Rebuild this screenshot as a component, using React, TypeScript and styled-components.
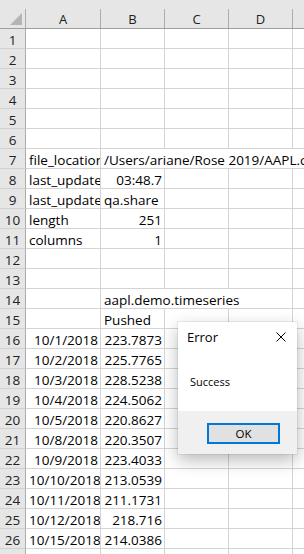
import styled, { createGlobalStyle } from "styled-components";

type Align = "left" | "right";
type CellDef = { text?: string; align?: Align; span?: number };

const COLS = ["A", "B", "C", "D", "E"];
const WIDTHS = [75, 64, 64, 64, 64];

const rows: { n: number; cells: CellDef[] }[] = [
  { n: 1, cells: [] },
  { n: 2, cells: [] },
  { n: 3, cells: [] },
  { n: 4, cells: [] },
  { n: 5, cells: [] },
  { n: 6, cells: [] },
  {
    n: 7,
    cells: [
      { text: "file_location" },
      { text: "/Users/ariane/Rose 2019/AAPL.csv", span: 4 },
    ],
  },
  { n: 8, cells: [{ text: "last_updated" }, { text: "03:48.7", align: "right" }] },
  { n: 9, cells: [{ text: "last_updated_by" }, { text: "qa.share" }] },
  { n: 10, cells: [{ text: "length" }, { text: "251", align: "right" }] },
  { n: 11, cells: [{ text: "columns" }, { text: "1", align: "right" }] },
  { n: 12, cells: [] },
  { n: 13, cells: [] },
  { n: 14, cells: [{}, { text: "aapl.demo.timeseries", span: 3 }] },
  { n: 15, cells: [{}, { text: "Pushed" }] },
  ...[
    ["10/1/2018", "223.7873"],
    ["10/2/2018", "225.7765"],
    ["10/3/2018", "228.5238"],
    ["10/4/2018", "224.5062"],
    ["10/5/2018", "220.8627"],
    ["10/8/2018", "220.3507"],
    ["10/9/2018", "223.4033"],
    ["10/10/2018", "213.0539"],
    ["10/11/2018", "211.1731"],
    ["10/12/2018", "218.716"],
    ["10/15/2018", "214.0386"],
    ["10/16/2018", "221.1946"],
  ].map(([d, v], i) => ({
    n: 16 + i,
    cells: [
      { text: d, align: "right" as Align },
      { text: v, align: "right" as Align },
    ],
  })),
];

// expand a row's defs into one entry per visible cell, merging spans
function fillRow(defs: CellDef[]) {
  const out: (CellDef & { width: number })[] = [];
  let col = 0;
  defs.forEach((d) => {
    const span = d.span ?? 1;
    const width = WIDTHS.slice(col, col + span).reduce((a, b) => a + b, 0);
    out.push({ ...d, width });
    col += span;
  });
  while (col < COLS.length) {
    out.push({ width: WIDTHS[col] });
    col++;
  }
  return out;
}

export default function App() {
  return (
    <>
      <GlobalStyle />
      <Sheet>
        <HeaderBar>
          <Corner>
            <svg width="12" height="12" viewBox="0 0 12 12">
              <polygon points="12,0 12,12 0,12" fill="#b4b4b4" />
            </svg>
          </Corner>
          {COLS.map((c, i) => (
            <ColHead key={c} $width={WIDTHS[i]}>
              {c}
            </ColHead>
          ))}
        </HeaderBar>
        {rows.map((r) => (
          <Row key={r.n}>
            <RowHead>{r.n}</RowHead>
            {fillRow(r.cells).map((c, i) => (
              <Cell key={i} $width={c.width} $align={c.align ?? "left"}>
                {c.text}
              </Cell>
            ))}
          </Row>
        ))}

        <Dialog>
          <DialogBody>
            <TitleRow>
              <Title>Error</Title>
              <svg width="10" height="10" viewBox="0 0 10 10">
                <path d="M0.5 0.5 L9.5 9.5 M9.5 0.5 L0.5 9.5" stroke="#000" strokeWidth="1" />
              </svg>
            </TitleRow>
            <Message>Success</Message>
          </DialogBody>
          <Footer>
            <OkButton>OK</OkButton>
          </Footer>
        </Dialog>
      </Sheet>
    </>
  );
}

const GlobalStyle = createGlobalStyle`
  html, body {
    margin: 0;
    padding: 0;
    background: #ffffff;
    overflow: hidden;
  }
  body {
    font-family: "Open Sans", "Liberation Sans", sans-serif;
    color: #000;
  }
  * {
    box-sizing: border-box;
  }
`;

const Sheet = styled.div`
  position: relative;
  width: 304px;
  height: 554px;
  overflow: hidden;
  background: #ffffff;
`;

const HeaderBar = styled.div`
  display: flex;
  align-items: flex-end;
  height: 29px;
  width: max-content;
  background: #e6e6e6;
  border-bottom: 1px solid #9e9e9e;
`;

const Corner = styled.div`
  display: flex;
  justify-content: flex-end;
  align-items: flex-end;
  width: 26px;
  height: 19px;
  padding: 0 3px 3px 0;
  border-right: 1px solid #ababab;
  flex-shrink: 0;
`;

const ColHead = styled.div<{ $width: number }>`
  width: ${(p) => p.$width}px;
  height: 19px;
  flex-shrink: 0;
  border-right: 1px solid #ababab;
  text-align: center;
  font-size: 13px;
  line-height: 20px;
  color: #222;
`;

const Row = styled.div`
  display: flex;
  height: 20px;
  width: max-content;
`;

const RowHead = styled.div`
  width: 26px;
  height: 20px;
  flex-shrink: 0;
  background: #e6e6e6;
  border-right: 1px solid #ababab;
  border-bottom: 1px solid #d0d0d0;
  text-align: center;
  font-size: 13.5px;
  line-height: 22px;
  color: #222;
  overflow: hidden;
`;

const Cell = styled.div<{ $width: number; $align: Align }>`
  width: ${(p) => p.$width}px;
  height: 20px;
  flex-shrink: 0;
  padding: 0 2px 0 3px;
  border-right: 1px solid #d4d4d4;
  border-bottom: 1px solid #d4d4d4;
  text-align: ${(p) => p.$align};
  font-size: 13.5px;
  line-height: 22px;
  white-space: nowrap;
  overflow: hidden;
`;

const Dialog = styled.div`
  position: absolute;
  left: 178px;
  top: 322px;
  width: 119px;
  height: 132px;
  display: flex;
  flex-direction: column;
  background: #ffffff;
  box-shadow: 0 0 0 1px rgba(0, 0, 0, 0.06), 0 6px 16px rgba(0, 0, 0, 0.28);
`;

const DialogBody = styled.div`
  flex: 1;
  display: flex;
  flex-direction: column;
`;

const TitleRow = styled.div`
  height: 30px;
  display: flex;
  align-items: center;
  justify-content: space-between;
  padding: 0 11px 0 9px;
`;

const Title = styled.span`
  font-size: 13px;
  color: #000;
`;

const Message = styled.div`
  margin-top: 22px;
  padding-left: 12px;
  font-size: 11px;
  line-height: 15px;
`;

const Footer = styled.div`
  height: 43px;
  background: #f0f0f0;
  padding: 10px 0 0 29px;
`;

const OkButton = styled.button`
  width: 73px;
  height: 21px;
  padding: 0;
  border: 2px solid #0078d7;
  background: #e1e1e1;
  font-family: "Open Sans", "Liberation Sans", sans-serif;
  font-size: 11.5px;
  line-height: 17px;
  color: #000;
`;
